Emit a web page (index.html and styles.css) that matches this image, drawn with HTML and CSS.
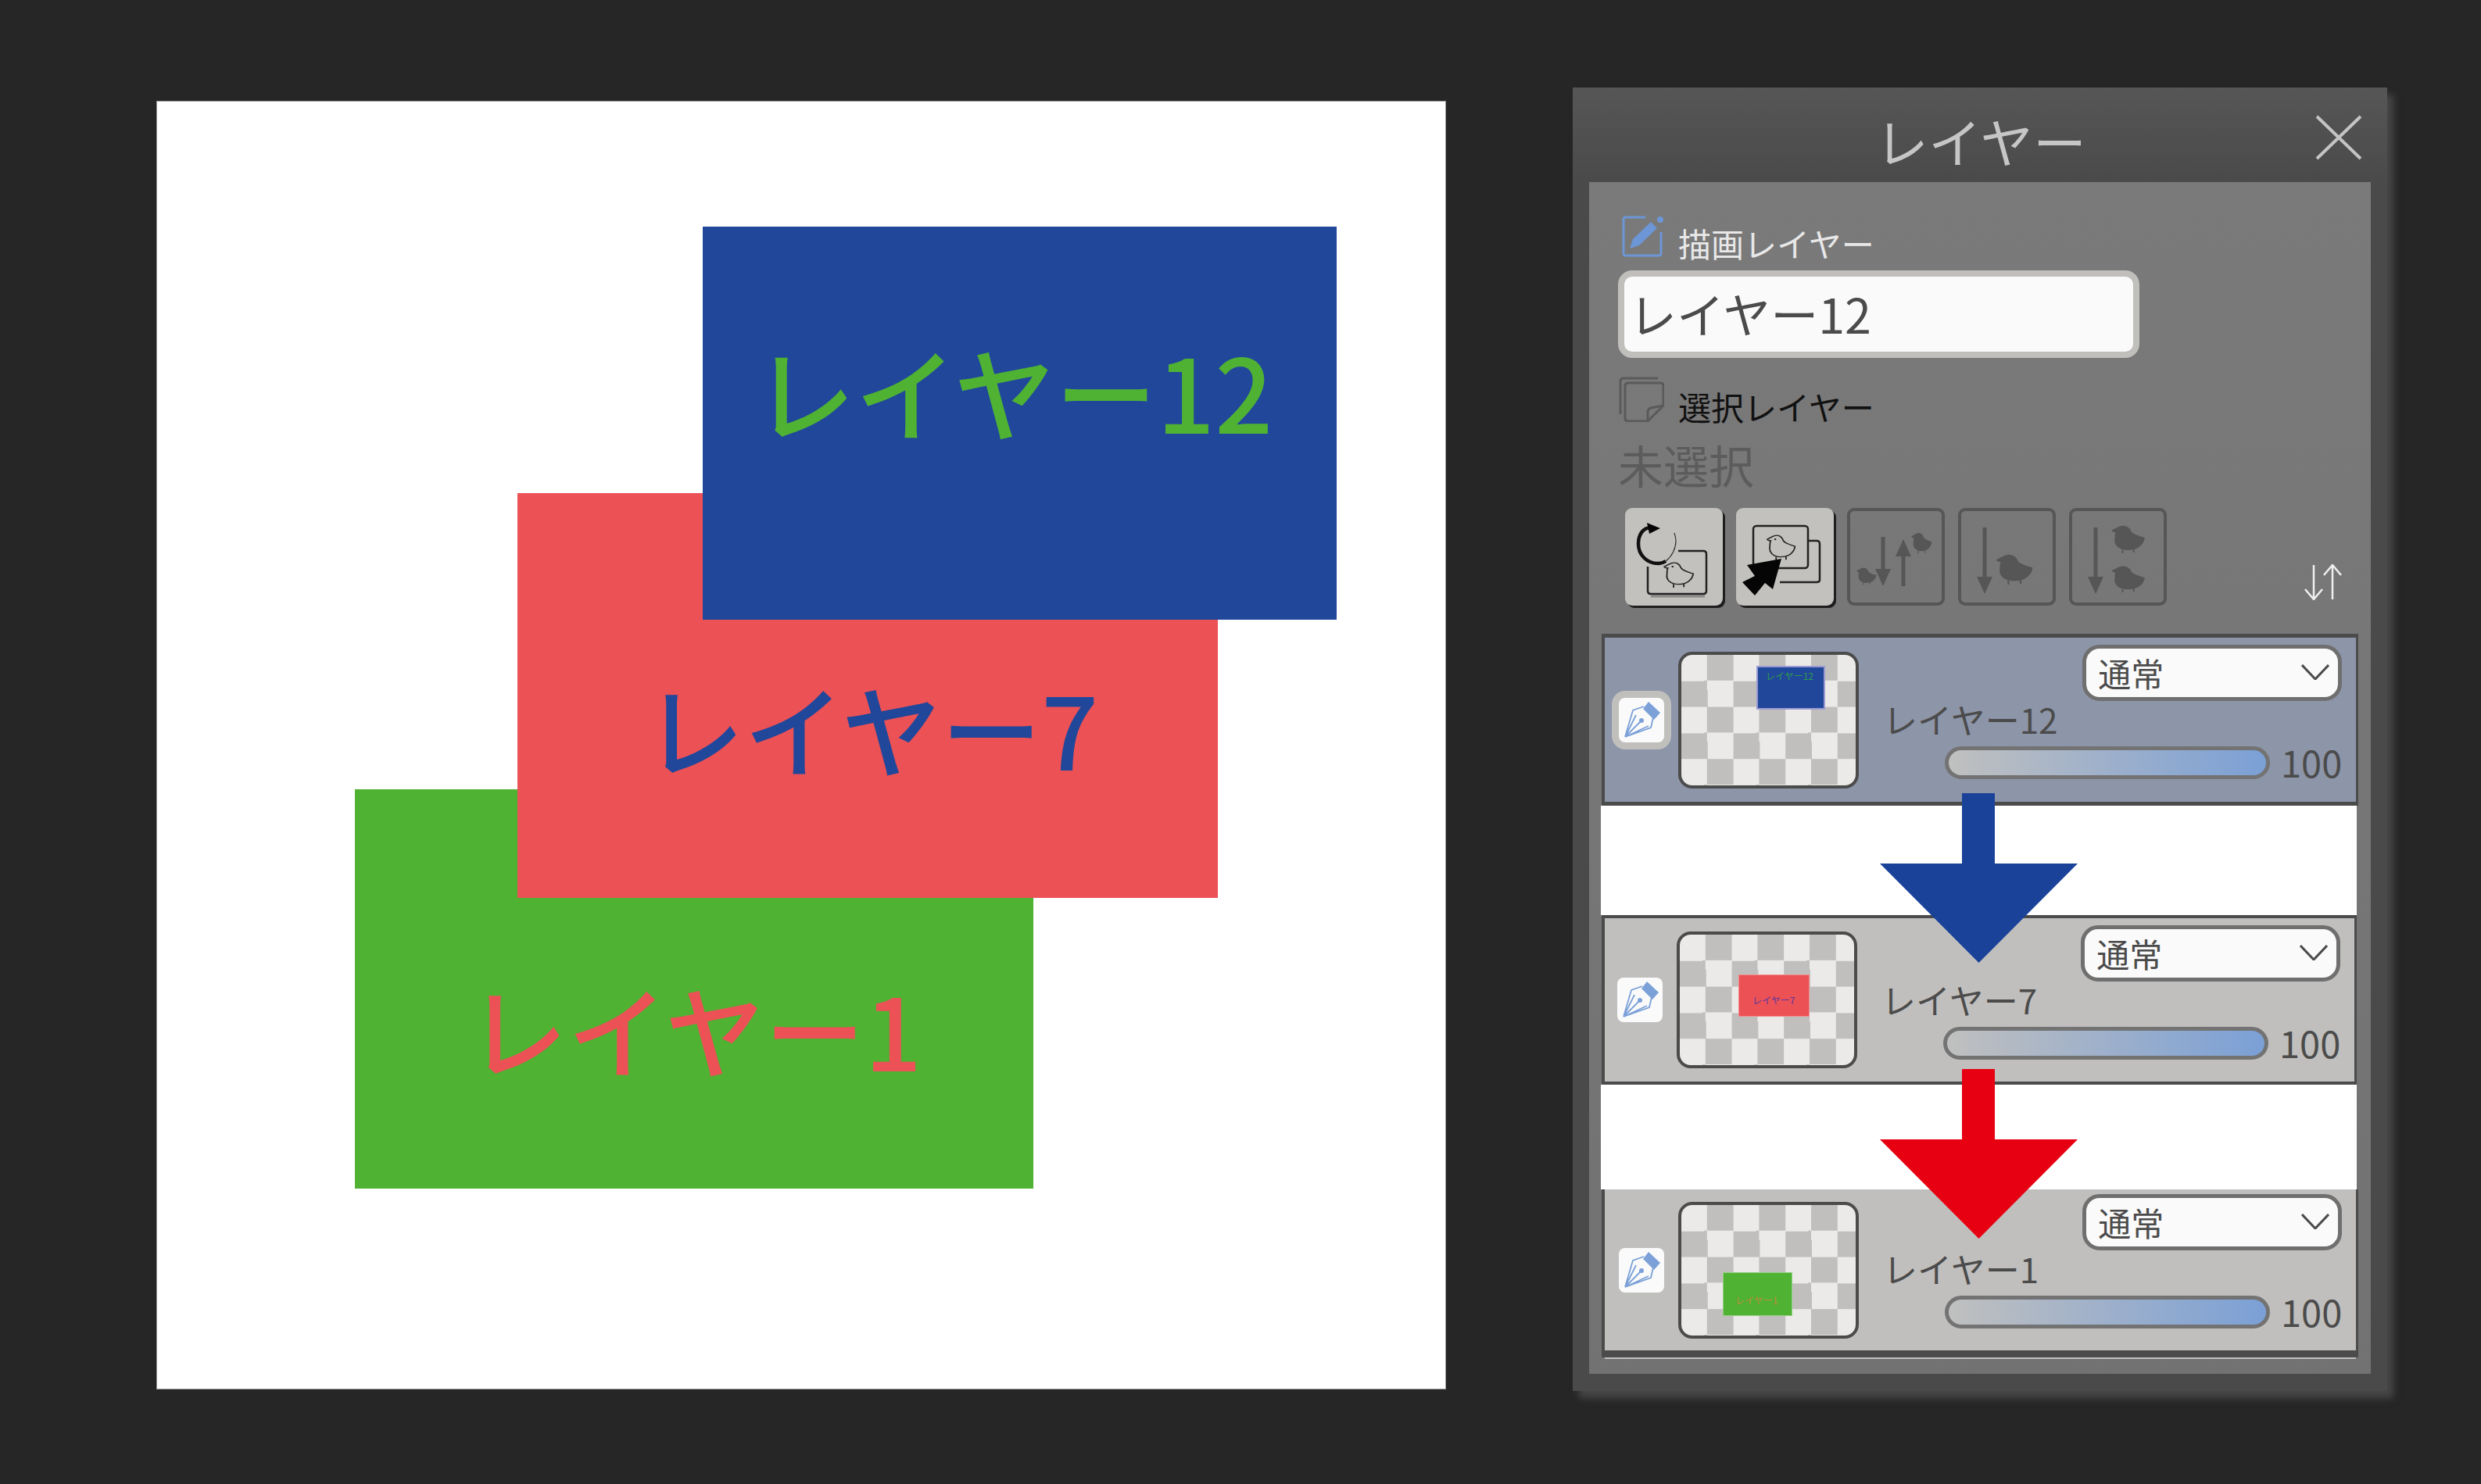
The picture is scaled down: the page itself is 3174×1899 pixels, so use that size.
FILE: index.html
```html
<!DOCTYPE html>
<html lang="ja">

<head>
    <meta charset="UTF-8">
    <title>レイヤー</title>
    <link rel="stylesheet" href="styles.css">
</head>

<body>
    <div class="stage">
        <!-- canvas -->
        <div class="canvas">
            <div class="block block-green">レイヤー1</div>
            <div class="block block-red">レイヤー7</div>
            <div class="block block-blue">レイヤー12</div>
        </div>

        <!-- layer panel -->
        <div class="panel">
            <div class="panel-head">
                <span class="panel-title">レイヤー</span>
                <svg class="close" viewBox="0 0 60 58">
                    <path d="M2 2L58 56M58 2L2 56" />
                </svg>
            </div>
            <div class="panel-body">
                <div class="label-row label-draw">
                    <svg class="label-icon" viewBox="0 0 54 54">
                        <path class="edit-box" d="M30 3H5Q2 3 2 6V49Q2 52 5 52H47Q50 52 50 49V22" />
                        <path class="edit-pen" d="M10 43L14 31L37 9L45 17L22 39Z" />
                        <circle class="edit-pen" cx="49" cy="6" r="4" />
                    </svg>
                    <span class="label-text text-light">描画レイヤー</span>
                </div>
                <input class="name-input" type="text" value="レイヤー12">

                <div class="label-row label-select">
                    <svg class="label-icon" viewBox="0 0 58 58">
                        <path class="page" d="M50 2H6Q2 2 2 6V48" />
                        <path class="page" d="M12 8H53Q57 8 57 12V37L37 57H12Q8 57 8 53V12Q8 8 12 8Z" />
                        <path class="page" d="M57 37L41 40Q38 41 37 44V57" />
                    </svg>
                    <span class="label-text text-dark">選択レイヤー</span>
                </div>
                <div class="none-selected">未選択</div>

                <div class="tools">
                    <button class="tool tool-on">
                        <svg viewBox="0 0 125 125">
                            <symbol id="chick" viewBox="0 0 40 40" preserveAspectRatio="none">
                                <path d="M13 4C18 2 22 6 23 11C25 15 31 17 36 19C35 28 29 34 20 34C11 34 7 27 8 20C8 16 8 13 9 11C7 11 5 10 5 9C7 8 9 6 13 4Z" />
                                <path d="M15 34V39M26 33V38" />
                                <circle class="chick-eye" cx="14" cy="9" r="1.2" />
                            </symbol>
                            <path class="line-soft" d="M33 113H102" />
                            <path class="line" d="M68 55H100Q104 55 104 59V106Q104 110 100 110H33Q29 110 29 106V75" />
                            <path class="line-thick" d="M34 25C22 25 17 35 17 46C17 60 28 71 42 71C46 71 49 70 52 68" />
                            <path class="line-thin" d="M52 68C60 62 65 52 65 42C65 38 64 35 63 32" />
                            <polygon class="solid" points="28,19 45,26 31,33" />
                            <use class="chick-line" href="#chick" x="44" y="67" width="48" height="36" />
                        </svg>
                    </button>
                    <button class="tool tool-on">
                        <svg viewBox="0 0 125 125">
                            <path class="line" d="M93 42H103Q107 42 107 46V92Q107 95 103 95H56" />
                            <rect class="line" x="22" y="23" width="70" height="54" rx="4" />
                            <use class="chick-line" href="#chick" x="34" y="32" width="46" height="36" />
                            <polygon class="solid" points="58,65 14,73 24,87 8,95 24,112 37,96 47,104" />
                        </svg>
                    </button>
                    <button class="tool">
                        <svg viewBox="0 0 125 125">
                            <path class="arrow-line" d="M46 37V85M72 55V100" />
                            <polygon class="dim" points="36,78 56,78 46,100" />
                            <polygon class="dim" points="62,62 82,62 72,40" />
                            <use class="chick-dim" href="#chick" x="79" y="30" width="32" height="29" />
                            <use class="chick-dim" href="#chick" x="9" y="75" width="31" height="24" />
                        </svg>
                    </button>
                    <button class="tool">
                        <svg viewBox="0 0 125 125">
                            <path class="arrow-line" d="M34 25V95" />
                            <polygon class="dim" points="24,88 44,88 34,110" />
                            <use class="chick-dim" href="#chick" x="43" y="57" width="57" height="42" />
                        </svg>
                    </button>
                    <button class="tool">
                        <svg viewBox="0 0 125 125">
                            <path class="arrow-line" d="M34 25V95" />
                            <polygon class="dim" points="24,88 44,88 34,110" />
                            <use class="chick-dim" href="#chick" x="49" y="20" width="52" height="39" />
                            <use class="chick-dim" href="#chick" x="49" y="72" width="52" height="37" />
                        </svg>
                    </button>
                    <svg class="sort" viewBox="0 0 52 46">
                        <path d="M14 1V44M3 32L14 45L25 32M38 45V2M27 14L38 1L49 14" />
                    </svg>
                </div>

                <div class="list">
                    <div class="row row-active">
                        <div class="pen pen-on">
                            <svg viewBox="0 0 58 57">
                                <symbol id="nib" viewBox="0 0 58 57">
                                    <path class="nib-line" d="M8 50L18 16L32 11M44 25L41 38L8 50L28 30M8 50L22 22M8 50L38 36" />
                                    <polygon class="nib-fill" points="38,5 53,19 45,28 31,14" />
                                    <circle class="nib-fill" cx="29" cy="29" r="3" />
                                </symbol>
                                <use href="#nib" />
                            </svg>
                        </div>
                        <div class="thumb">
                            <div class="mini mini-blue">レイヤー12</div>
                        </div>
                        <div class="info">
                            <div class="mode">通常<svg viewBox="0 0 36 20"><path d="M1 1L18 19L35 1" /></svg></div>
                            <div class="layer-name">レイヤー12</div>
                            <div class="opacity">
                                <div class="slider"></div>
                                <span class="opacity-value">100</span>
                            </div>
                        </div>
                    </div>

                    <div class="gap gap-a"></div>

                    <div class="row row-mid">
                        <div class="pen"><svg viewBox="0 0 58 57"><use href="#nib" /></svg></div>
                        <div class="thumb">
                            <div class="mini mini-red">レイヤー7</div>
                        </div>
                        <div class="info">
                            <div class="mode">通常<svg viewBox="0 0 36 20"><path d="M1 1L18 19L35 1" /></svg></div>
                            <div class="layer-name">レイヤー7</div>
                            <div class="opacity">
                                <div class="slider"></div>
                                <span class="opacity-value">100</span>
                            </div>
                        </div>
                    </div>

                    <div class="gap gap-b"></div>

                    <div class="row row-last">
                        <div class="pen"><svg viewBox="0 0 58 57"><use href="#nib" /></svg></div>
                        <div class="thumb">
                            <div class="mini mini-green">レイヤー1</div>
                        </div>
                        <div class="info">
                            <div class="mode">通常<svg viewBox="0 0 36 20"><path d="M1 1L18 19L35 1" /></svg></div>
                            <div class="layer-name">レイヤー1</div>
                            <div class="opacity">
                                <div class="slider"></div>
                                <span class="opacity-value">100</span>
                            </div>
                        </div>
                    </div>
                    <div class="row-end"></div>

                    <!-- big arrows drawn over the list -->
                    <svg class="big-arrow arrow-blue" viewBox="0 0 253 217">
                        <polygon points="105,0 147,0 147,90 253,90 126.5,217 0,90 105,90" />
                    </svg>
                    <svg class="big-arrow arrow-red" viewBox="0 0 253 217">
                        <polygon points="105,0 147,0 147,90 253,90 126.5,217 0,90 105,90" />
                    </svg>
                </div>
            </div>
        </div>
    </div>
</body>

</html>
```
FILE: styles.css
```css
body {
    margin: 0;
    background-color: #262626;
    font-family: "Noto Sans CJK JP", "Noto Sans", sans-serif;
    color: #4b4b4b;
}

.stage {
    display: flex;
    align-items: flex-start;
    height: 1899px;
    box-sizing: border-box;
    padding: 112px 0 0 201px;
    overflow: hidden;
}

/* canvas */
.canvas {
    position: relative;
    flex: none;
    width: 1648px;
    height: 1647px;
    margin-top: 18px;
    background-color: #fff;
    outline: 1px solid #9a9a9a;
}

.block {
    position: absolute;
    box-sizing: border-box;
    font-size: 128px;
    font-weight: 500;
    line-height: 1;
    white-space: nowrap;
}

.block-green {
    left: 253px;
    top: 880px;
    width: 868px;
    height: 511px;
    padding: 242px 0 0 144px;
    background-color: #4fb233;
    color: #ec5155;
}

.block-red {
    left: 461px;
    top: 501px;
    width: 896px;
    height: 518px;
    padding: 236px 0 0 162px;
    background-color: #ec5155;
    color: #21479b;
}

.block-blue {
    left: 698px;
    top: 160px;
    width: 811px;
    height: 503px;
    padding: 143px 0 0 65px;
    background-color: #21479b;
    color: #4fb233;
    font-size: 130px;
}

/* panel */
.panel {
    flex: none;
    width: 1042px;
    height: 1668px;
    margin-left: 163px;
    background: linear-gradient(#565656, #4a4a4a 120px);
    box-shadow: 8px 9px 9px #474747;
}

.panel-head {
    position: relative;
    display: flex;
    justify-content: center;
    height: 121px;
}

.panel-title {
    margin-top: 30px;
    margin-left: 2px;
    font-size: 68px;
    line-height: 76px;
    color: #c6c6c6;
}

.close {
    position: absolute;
    right: 32px;
    top: 35px;
    width: 60px;
    height: 58px;
    fill: none;
    stroke: #c4c4c4;
    stroke-width: 4;
}

.panel-body {
    height: 1525px;
    margin: 0 21px;
    box-sizing: border-box;
    padding-top: 42px;
    background: linear-gradient(#7a7a7a, #727272);
}

.label-row {
    display: flex;
    align-items: flex-end;
    gap: 18px;
}

.label-draw {
    margin-left: 42px;
}

.label-select {
    margin: 24px 0 0 38px;
}

.label-draw .label-icon {
    width: 54px;
    height: 54px;
}

.label-select .label-icon {
    width: 58px;
    height: 58px;
}

.label-text {
    font-size: 42px;
    line-height: 44px;
    margin-bottom: -4px;
}

.text-light {
    color: #e8e8e8;
}

.text-dark {
    color: #111;
    margin-bottom: -2px;
}

.edit-box {
    fill: none;
    stroke: #6c96d6;
    stroke-width: 3;
}

.edit-pen {
    fill: #6c96d6;
}

.page {
    fill: none;
    stroke: #5a5a5a;
    stroke-width: 3;
}

.name-input {
    display: block;
    width: 667px;
    height: 112px;
    margin: 17px 0 0 37px;
    box-sizing: border-box;
    padding: 0 0 4px 6px;
    border: 8px solid #c0bfbc;
    border-radius: 18px;
    background-color: #fafafa;
    font-family: inherit;
    font-size: 61px;
    color: #4b4b4b;
    outline: none;
}

.none-selected {
    margin: 24px 0 0 37px;
    font-size: 58px;
    line-height: 60px;
    color: #5c5c5c;
}

/* tool buttons */
.tools {
    display: flex;
    align-items: flex-end;
    gap: 17px;
    margin: 26px 35px 0 46px;
}

.tool {
    flex: none;
    width: 125px;
    height: 125px;
    padding: 0;
    box-sizing: border-box;
    border: 4px solid #565656;
    border-radius: 9px;
    background: none;
}

.tool svg {
    display: block;
    width: 125px;
    height: 125px;
    margin: -4px;
}

.tool-on {
    border: none;
    background-color: #c2c1be;
    box-shadow: 3px 3px 0 #1e1e1e;
}

.tool-on svg {
    margin: 0;
}

.line {
    fill: none;
    stroke: #222;
    stroke-width: 2.5;
}

.line-soft {
    fill: none;
    stroke: #8a8a8a;
    stroke-width: 3;
}

.line-thick {
    fill: none;
    stroke: #111;
    stroke-width: 4.5;
}

.line-thin {
    fill: none;
    stroke: #333;
    stroke-width: 1.2;
}

.solid {
    fill: #050505;
}

.dim {
    fill: #565656;
}

.arrow-line {
    fill: none;
    stroke: #565656;
    stroke-width: 5;
}

.chick-line {
    fill: none;
    stroke: #222;
    stroke-width: 1.5;
    color: #222;
}

.chick-dim {
    fill: #565656;
    stroke: #565656;
    stroke-width: 1.5;
    color: #565656;
}

.chick-eye {
    fill: currentColor;
    stroke: none;
}

.sort {
    flex: none;
    width: 52px;
    height: 46px;
    margin: 0 0 7px auto;
    fill: none;
    stroke: #f0f0f0;
    stroke-width: 2.5;
}

/* layer list */
.list {
    position: relative;
    width: 968px;
    margin: 36px 0 0 16px;
}

.gap {
    margin-left: -1px;
    width: 967px;
    background-color: #fff;
}

.gap-a {
    height: 140px;
}

.gap-b {
    height: 134px;
}

.row {
    display: flex;
    align-items: center;
    box-sizing: border-box;
    border: solid #4b4b4b;
    border-width: 5px 3px 5px 4px;
    background-color: #c0bfbd;
}

.row-active {
    height: 220px;
    padding: 0 20px 0 18px;
    background-color: #8d95a8;
}

.row-mid {
    width: 966px;
    height: 217px;
    padding: 0 19px 0 16px;
    border-width: 4px 3px 4px 4px;
}

.row-last {
    height: 215px;
    padding: 0 20px 0 18px;
    border-top: none;
    border-bottom-width: 9px;
}

.row-end {
    height: 2px;
    margin: 0 3px 0 4px;
    background-color: #c0bfbd;
}

.pen {
    flex: none;
    width: 58px;
    height: 57px;
    border-radius: 8px;
    background-color: #fafafa;
}

.pen svg {
    display: block;
    width: 58px;
    height: 57px;
}

.pen-on {
    box-shadow: 0 0 0 9px #c0bfbc;
}

.nib-line {
    fill: none;
    stroke: #7ba1d8;
    stroke-width: 1.8;
}

.nib-fill {
    fill: #7ba1d8;
}

.thumb {
    position: relative;
    flex: none;
    width: 231px;
    height: 175px;
    margin-left: 18px;
    box-sizing: border-box;
    border: 4px solid #4b4b4b;
    border-radius: 18px;
    background-color: #ebeae8;
    background-image: conic-gradient(#c0bfbd 25%, #ebeae8 0 50%, #c0bfbd 0 75%, #ebeae8 0);
    background-size: 66.6px 66.6px;
    overflow: hidden;
}

.mini {
    position: absolute;
    box-sizing: border-box;
    font-size: 12px;
    line-height: 1;
    white-space: nowrap;
}

.mini-blue {
    left: 98px;
    top: 16px;
    width: 84px;
    height: 52px;
    padding: 5px 0 0 10px;
    background-color: #21479b;
    color: #2f9a4a;
    box-shadow: 0 0 0 2px #9a9ad0;
}

.mini-red {
    left: 76px;
    top: 52px;
    width: 89px;
    height: 52px;
    padding: 26px 0 0 17px;
    background-color: #ec5155;
    color: #5a36a0;
    box-shadow: 0 0 0 1px #f08a8c;
}

.mini-green {
    left: 54px;
    top: 87px;
    width: 87px;
    height: 54px;
    padding: 29px 0 0 15px;
    background-color: #4fb233;
    color: #c08a3a;
    box-shadow: 0 0 0 1px #95cf85;
}

.info {
    flex: 1;
    align-self: flex-start;
    display: flex;
    flex-direction: column;
    margin-left: 22px;
}

.row-active .info {
    padding-top: 9px;
}

.row-mid .info {
    padding-top: 9px;
}

.row-last .info {
    padding-top: 6px;
}

.mode {
    display: flex;
    align-items: center;
    justify-content: space-between;
    align-self: flex-end;
    width: 332px;
    height: 72px;
    box-sizing: border-box;
    padding: 0 11px 2px 15px;
    border: 5px solid #6f6f6f;
    border-radius: 22px;
    background-color: #fafafa;
    font-size: 42px;
    color: #4b4b4b;
}

.mode svg {
    width: 36px;
    height: 20px;
    fill: none;
    stroke: #4b4b4b;
    stroke-width: 3;
}

.layer-name {
    height: 58px;
    margin: -6px 0 6px 9px;
    font-size: 44px;
    line-height: 58px;
    color: #4b4b4b;
}

.opacity {
    display: flex;
    align-items: center;
    gap: 14px;
    margin-left: 88px;
}

.slider {
    flex: none;
    width: 416px;
    height: 42px;
    box-sizing: border-box;
    border: 5px solid #737373;
    border-radius: 21px;
    background: linear-gradient(90deg, #c0c0bf, #7ba0d6);
}

.opacity-value {
    margin-top: -2px;
    font-size: 47px;
    line-height: 42px;
    color: #4b4b4b;
}

.big-arrow {
    position: absolute;
    left: 356px;
    width: 253px;
    height: 217px;
}

.arrow-blue {
    top: 204px;
    fill: #1a4299;
}

.arrow-red {
    top: 557px;
    fill: #e60012;
}
```
